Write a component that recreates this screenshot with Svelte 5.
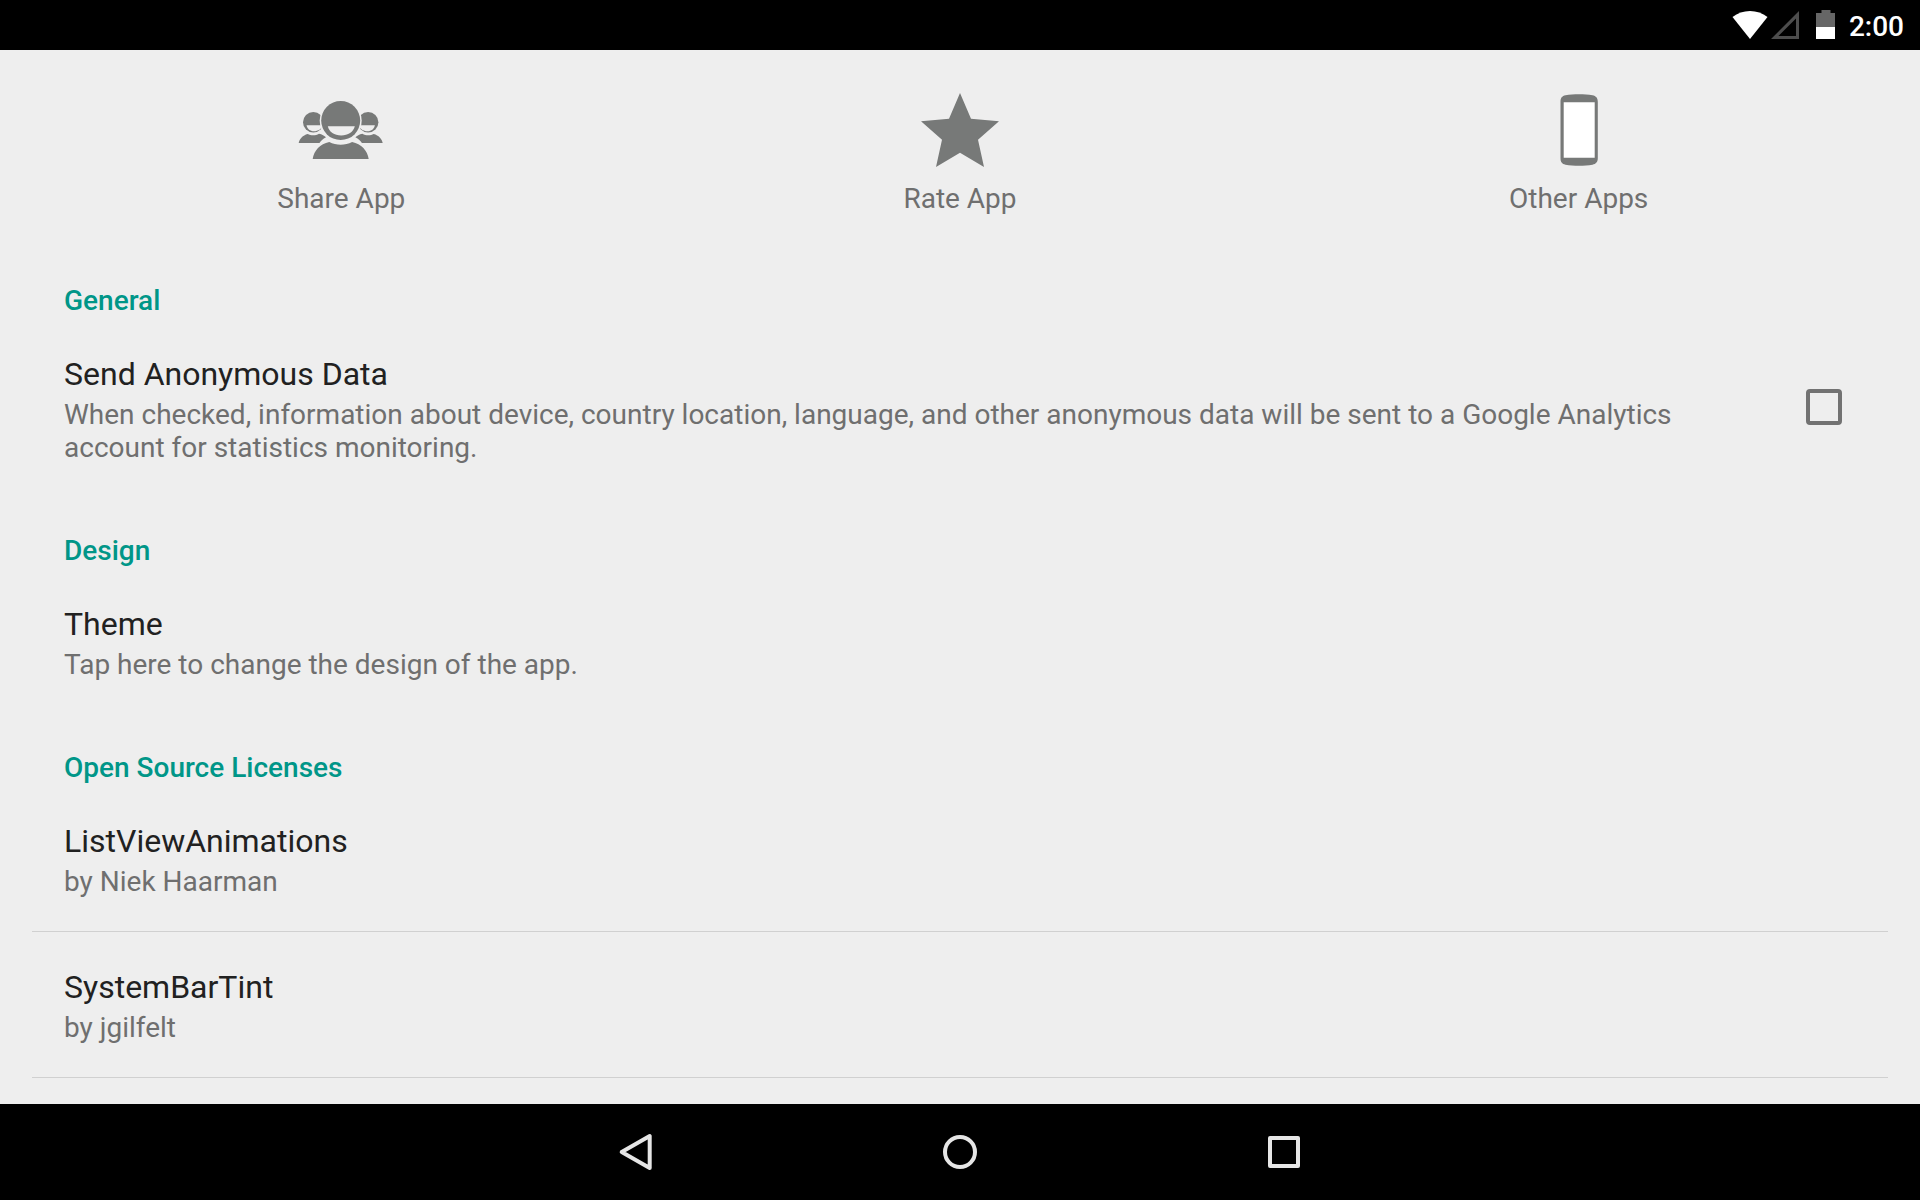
<script>
  const general = {
    title: 'Send Anonymous Data',
    summary:
      'When checked, information about device, country location, language, and other anonymous data will be sent to a Google Analytics account for statistics monitoring.'
  };
  const licenses = [
    { title: 'ListViewAnimations', summary: 'by Niek Haarman' },
    { title: 'SystemBarTint', summary: 'by jgilfelt' }
  ];
  let sendData = $state(false);
</script>

<div class="screen">
  <header class="status">
    <svg class="wifi" viewBox="0 0 36 30" aria-label="Wi-Fi" role="img">
      <path d="M.5 7C5.500 3 11.500 1 18 1s12.500 2 17.500 6L18 29z" fill="#fff" />
    </svg>
    <svg class="signal" viewBox="0 0 30 30" aria-label="No signal" role="img">
      <path d="M29 1v28H1zM26 8.400L8.400 26H26z" fill="#4d4d4d" fill-rule="evenodd" />
    </svg>
    <svg class="battery" viewBox="0 0 20 30" aria-label="Battery" role="img">
      <path d="M5.500 0h9v3H19v14H0V3h5.500z" fill="#666" />
      <path d="M0 17h19v12H0z" fill="#fff" />
    </svg>
    <time class="clock">2:00</time>
  </header>

  <main>
    <nav class="actions">
      <button type="button">
        <svg viewBox="0 0 96 96" aria-hidden="true">
          <g id="side">
            <circle cx="20.300" cy="40.300" r="10.300" fill="#777978" />
            <path d="M13.500 43.300H30C28.500 47 25 49.300 21 49.300s-6.700-2.300-7.500-6z" fill="#eee" />
            <path d="M5.700 61C6.500 57 9.700 53.300 14.700 52c3.300 1.700 8 1.700 11.300-.3 3 .6 5.500 2 7 3.600-3 1.500-5.300 3.700-6.500 5.700z" fill="#777978" />
          </g>
          <use href="#side" transform="translate(95.400 0) scale(-1 1)" />
          <circle cx="47.700" cy="38.600" r="21" fill="#eee" />
          <circle cx="47.700" cy="38.600" r="19.500" fill="#777978" />
          <path d="M34.800 44.300h27C60.500 50 55 53.500 48.200 53.500S36 50 34.800 44.300z" fill="#eee" />
          <path d="M19.700 77C21 68.500 27 62 36.300 60c7 3.600 15.800 3.600 22.800 0C68.300 62 74.500 68.500 75.700 77z" fill="#777978" />
        </svg>
        <span>Share App</span>
      </button>
      <button type="button">
        <svg viewBox="0 0 96 96" aria-hidden="true">
          <path d="M48 11l11 25.700 28 2.600-21 18.400L72 85 48 70.700 24 85l6-27.300L9 39.300l28-2.600z" fill="#777978" />
        </svg>
        <span>Rate App</span>
      </button>
      <button type="button">
        <svg viewBox="0 0 96 96" aria-hidden="true">
          <path d="M29.500 20c0-4 1.500-6 5-6.700 8-1.300 19-1.300 27 0 3.500.7 5.300 2.700 5.300 6.700v56c0 4-1.800 6-5.300 6.700-8 1.300-19 1.300-27 0-3.500-.7-5-2.700-5-6.700z" fill="#777978" />
          <path d="M32.700 20.300h31v55.400h-31z" fill="#fff" />
        </svg>
        <span>Other Apps</span>
      </button>
    </nav>

    <section>
      <h2>General</h2>
      <label class="item">
        <span class="text">
          <span class="title">{general.title}</span>
          <span class="summary">{general.summary}</span>
        </span>
        <input type="checkbox" bind:checked={sendData} />
      </label>
    </section>

    <section>
      <h2>Design</h2>
      <button type="button" class="item">
        <span class="text">
          <span class="title">Theme</span>
          <span class="summary">Tap here to change the design of the app.</span>
        </span>
      </button>
    </section>

    <section>
      <h2>Open Source Licenses</h2>
      {#each licenses as item}
        <button type="button" class="item divided">
          <span class="text">
            <span class="title">{item.title}</span>
            <span class="summary">{item.summary}</span>
          </span>
        </button>
      {/each}
    </section>
  </main>

  <footer class="navbar">
    <button type="button" aria-label="Back">
      <svg viewBox="0 0 48 48"><path d="M37.700 8v32L9.700 24z" /></svg>
    </button>
    <button type="button" aria-label="Home">
      <svg viewBox="0 0 48 48"><circle cx="24" cy="24" r="15" /></svg>
    </button>
    <button type="button" aria-label="Recent apps">
      <svg viewBox="0 0 48 48"><rect x="10" y="10" width="28" height="28" /></svg>
    </button>
  </footer>
</div>

<style>
  :global(body) {
    background: #eee;
  }

  .screen {
    display: flex;
    flex-direction: column;
    min-height: 100vh;
    background: #eee;
    color: #212121;
    font-family: Roboto, 'Noto Sans', sans-serif;
  }

  button {
    padding: 0;
    border: 0;
    background: none;
    color: inherit;
    font: inherit;
    cursor: pointer;
  }

  .status {
    display: flex;
    align-items: center;
    justify-content: flex-end;
    height: 50px;
    padding: 0 16px;
    background: #000;
    color: #fff;
  }

  .status svg {
    height: 30px;
  }

  .wifi {
    width: 36px;
  }

  .signal {
    width: 30px;
    margin: 0 16px 0 2px;
  }

  .battery {
    width: 20px;
    margin-right: 13px;
  }

  .clock {
    padding-top: 3px;
    font-size: 28px;
    font-weight: 500;
    line-height: 33px;
  }

  main {
    flex: 1;
  }

  .actions {
    display: grid;
    grid-template-columns: repeat(3, 1fr);
    padding: 32px;
  }

  .actions button {
    display: flex;
    flex-direction: column;
    align-items: center;
    gap: 4px;
    color: #6f6f6f;
    font-size: 28px;
    line-height: 33px;
  }

  .actions svg {
    width: 96px;
    height: 96px;
  }

  h2 {
    margin: 0;
    padding: 37px 64px 2px;
    color: #009688;
    font-size: 28px;
    font-weight: 500;
    line-height: 33px;
  }

  .item {
    display: flex;
    align-items: center;
    box-sizing: border-box;
    width: calc(100% - 64px);
    margin: 0 32px;
    padding: 31px 32px 33px;
    text-align: left;
    cursor: pointer;
  }

  .divided {
    border-bottom: 1px solid #d0d0d0;
  }

  .text {
    flex: 1;
  }

  .title,
  .summary {
    display: block;
  }

  .title {
    font-size: 32px;
    line-height: 48px;
  }

  .summary {
    color: #6f6f6f;
    font-size: 28px;
    line-height: 33px;
  }

  input {
    appearance: none;
    flex: none;
    box-sizing: border-box;
    width: 36px;
    height: 36px;
    margin: 0 14px 0 64px;
    border: 4px solid #727272;
    border-radius: 4px;
  }

  input:checked {
    border-color: #009688;
    background: #009688;
  }

  .navbar {
    display: flex;
    justify-content: center;
    height: 96px;
    background: #000;
  }

  .navbar button {
    display: flex;
    align-items: center;
    justify-content: center;
    flex: 0 1 324px;
  }

  .navbar svg {
    width: 48px;
    height: 48px;
    fill: none;
    stroke: #e6e6e6;
    stroke-width: 4;
    stroke-linejoin: round;
  }
</style>
